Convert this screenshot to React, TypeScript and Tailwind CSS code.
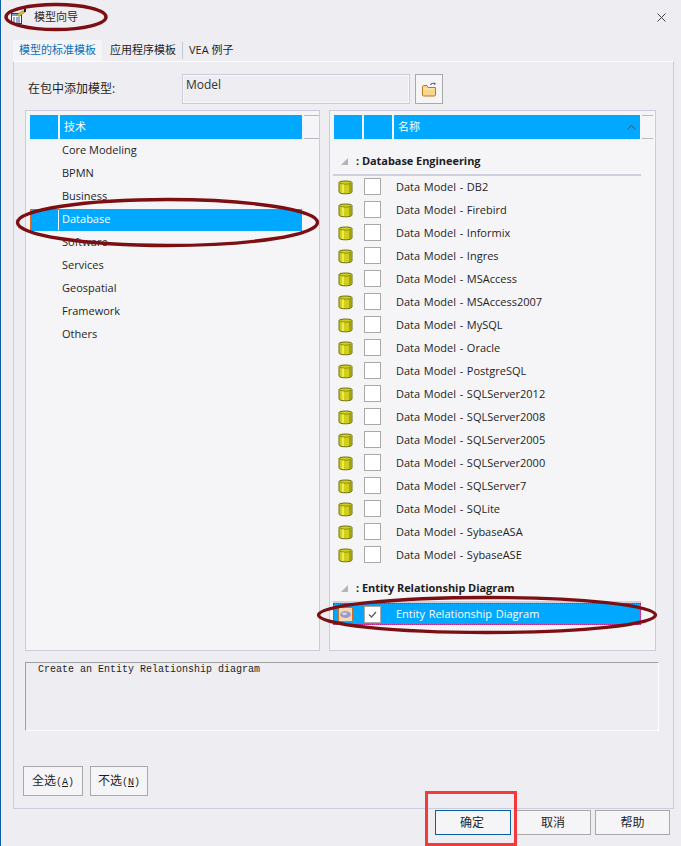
// App.tsx
// Boîte de dialogue "模型向导" : onglets, deux listes, description, boutons.
const font = { ui: 'font-["Open_Sans","Noto_Sans_CJK_SC",sans-serif]' }

const techs = ['Core Modeling', 'BPMN', 'Business', 'Database', 'Software', 'Services', 'Geospatial', 'Framework', 'Others']

const models = [
  'DB2', 'Firebird', 'Informix', 'Ingres', 'MSAccess', 'MSAccess2007', 'MySQL', 'Oracle', 'PostgreSQL',
  'SQLServer2012', 'SQLServer2008', 'SQLServer2005', 'SQLServer2000', 'SQLServer7', 'SQLite', 'SybaseASA', 'SybaseASE',
]

function DbIcon() {
  return (
    <svg width="15" height="16" viewBox="0 0 15 16" className="shrink-0 mb-[2px]">
      <path d="M1 3.5 C1 1.5 14 1.5 14 3.5 V13 C14 15.4 1 15.4 1 13 Z" fill="#cfcf1c" stroke="#6f6f12" />
      <path d="M2 4 C4 5.6 11 5.6 13 4" fill="none" stroke="#8c8c14" />
      <rect x="4" y="5.5" width="2" height="8.5" fill="#ecec50" />
      <rect x="11" y="5" width="2" height="9" fill="#a3a316" />
    </svg>
  )
}

function ErIcon() {
  return (
    <svg width="15" height="15" viewBox="0 0 15 15" className="shrink-0">
      <rect x="0.5" y="0.5" width="14" height="14" fill="#f4d9b8" stroke="#c4722c" />
      <ellipse cx="7.5" cy="7.5" rx="5" ry="3" fill="#9a9ccf" stroke="#8082b5" strokeWidth="0.6" />
      <ellipse cx="6.5" cy="6.8" rx="2.5" ry="1.2" fill="#d5d6ee" />
    </svg>
  )
}

function FolderIcon() {
  return (
    <svg width="15" height="15" viewBox="0 0 15 15">
      <path d="M8.5 3 C9 1.5 11 1 13 1.5" fill="none" stroke="#5a5a85" strokeWidth="1.2" />
      <path d="M12 0.5 L14 1.8 L12 3.2 Z" fill="#5a5a85" />
      <path d="M0.5 4.5 V13 C0.5 13.6 1 14 1.5 14 H12.5 C13 14 13.5 13.6 13.5 13 V5.5 H6 L5 3.5 H1.5 C1 3.5 0.5 4 0.5 4.5 Z" fill="#f6d68c" stroke="#b87a1e" />
      <rect x="1.5" y="6.5" width="11" height="1" fill="#fdf0c8" />
    </svg>
  )
}

function TitleIcon() {
  return (
    <svg width="17" height="16" viewBox="0 0 17 16">
      <rect x="1.5" y="4.5" width="10" height="10" fill="#fff" stroke="#34404f" />
      <rect x="2" y="5" width="9" height="2" fill="#7f9cc9" />
      <path d="M3 9 H5 M6 9 H10 M3 11 H5 M6 11 H10 M3 13 H5 M6 13 H10" stroke="#2f56a3" />
      <path d="M6.5 6 L13 1.5 L15 3 L9 7.5 Z" fill="#d6c23e" stroke="#77701e" strokeWidth="0.6" />
      <rect x="14" y="0" width="2" height="3" fill="#1c1c1c" />
    </svg>
  )
}

function Check() {
  return (
    <svg width="11" height="11" viewBox="0 0 11 11">
      <path d="M2 5.5 L4.5 8 L9 3" fill="none" stroke="#5f5f5f" strokeWidth="1.3" />
    </svg>
  )
}

function Box({ checked, className = '' }: { checked?: boolean; className?: string }) {
  return (
    <span className={`w-[17px] h-[17px] shrink-0 bg-white border border-[#a9a9a9] flex items-center justify-center ${className}`}>
      {checked && <Check />}
    </span>
  )
}

function GroupHeader({ label }: { label: string }) {
  return (
    <div className="h-[26px] w-[308px] flex items-center pl-[8px] pb-[2px] text-[11px] font-bold tracking-[-0.05px] text-[#1e1e1e] border-b-2 border-[#cfcfe0]">
      <span className="w-0 h-0 border-l-[7px] border-l-transparent border-b-[7px] border-b-[#b4b4b4] mr-[8px]" />
      {label}
    </div>
  )
}

function Btn({ label, w, primary, hotkey }: { label: string; w: string; primary?: boolean; hotkey?: string }) {
  return (
    <button className={`${w} h-full bg-[#f5f5f8] border text-[12px] text-[#1e1e1e] ${primary ? 'border-[#0a5fa0] pr-[2px]' : 'border-[#a9a9a9]'}`}>
      {label}
      {hotkey && (
        <span className="font-['Liberation_Mono',monospace] text-[10px]">
          (<span className="underline">{hotkey}</span>)
        </span>
      )}
    </button>
  )
}

export default function App() {
  return (
    <div className={`relative w-[681px] h-[846px] overflow-hidden bg-[#eeeef2] border-l border-[#0a5fa5] text-[#1e1e1e] ${font.ui}`}>
      {/* barre de titre */}
      <div className="h-[40px] flex items-center pl-[9px] pr-[15px] pb-[6px]">
        <TitleIcon />
        <span className="ml-[7px] text-[11px] text-[#2b2b2b]">模型向导</span>
        <svg width="9" height="9" viewBox="0 0 9 9" className="ml-auto">
          <path d="M0.5 0.5 L8.5 8.5 M8.5 0.5 L0.5 8.5" stroke="#444" />
        </svg>
      </div>

      {/* onglets */}
      <div className="h-[21px] ml-[12px] flex items-center text-[11px]">
        <div className="w-[89px] h-full bg-[#f5f5f8] flex items-center pl-[6px] text-[#0e6fb8]">模型的标准模板</div>
        <div className="pl-[8px] pr-[6px] border-r border-[#c8c8d0]">应用程序模板</div>
        <div className="pl-[6px]">VEA 例子</div>
      </div>

      {/* panneau */}
      <div className="ml-[12px] w-[661px] h-[748px] border-x border-b border-[#ccccdc] border-t border-t-white pt-[12px] pl-[11px] flex flex-col">
        <div className="flex h-[30px] items-center">
          <span className="w-[157px] pl-[3px] text-[12px]">在包中添加模型:</span>
          <div className="w-[228px] h-full border border-[#ccccdc] shadow-[inset_0_0_0_1px_#f7f7fa] px-[3px] pt-[1px] text-[12px] text-[#333]">Model</div>
          <div className="ml-[5px] w-[28px] h-full bg-[#f5f5f8] border border-[#a9a9a9] flex items-center justify-center">
            <FolderIcon />
          </div>
        </div>

        <div className="mt-[6px] flex gap-[9px] h-[541px]">
          {/* liste de gauche */}
          <div className="w-[295px] border border-[#ccccdc] bg-[#f5f5f8] pt-[4px] pl-[4px]">
            <div className="flex h-[24px] gap-[2px]">
              <div className="w-[28px] bg-[#00a8ff]" />
              <div className="w-[242px] bg-[#00a8ff] flex items-center pl-[4px] text-[11px] text-white">技术</div>
              <div className="w-[15px] border-t border-b border-[#b9b9c4]" />
            </div>
            <div className="w-[272px]">
              {techs.map((t) =>
                t === 'Database' ? (
                  <div key={t} className="h-[22px] mt-[1px] flex items-center text-[11px] bg-[#00a8ff] text-white border border-dotted border-[#e26a2c]">
                    <span className="w-[29px] h-full shrink-0 border-r border-white -ml-px mr-[1px]" />
                    <span className="pl-[2px] pb-[2px]">{t}</span>
                  </div>
                ) : (
                  <div key={t} className="h-[23px] flex items-center text-[11px]">
                    <span className="w-[30px] h-full shrink-0" />
                    <span className="pl-[2px]">{t}</span>
                  </div>
                ),
              )}
            </div>
          </div>

          {/* liste de droite */}
          <div className="w-[327px] border border-[#ccccdc] bg-[#f5f5f8] pt-[4px] pl-[3px]">
            <div className="flex h-[24px] gap-[2px] pl-[1px]">
              <div className="w-[28px] bg-[#00a8ff]" />
              <div className="w-[28px] bg-[#00a8ff]" />
              <div className="w-[246px] bg-[#00a8ff] flex items-center justify-between pl-[4px] pr-[4px] text-[11px] text-white">
                名称
                <svg width="9" height="5" viewBox="0 0 9 5"><path d="M0.5 4.5 L4.5 0.5 L8.5 4.5" fill="none" stroke="#1f5f86" /></svg>
              </div>
              <div className="w-[11px] border-t border-b border-[#b9b9c4]" />
            </div>
            <div className="mt-[11px]">
              <GroupHeader label=": Database Engineering" />
            </div>
            {models.map((m) => (
              <div key={m} className="h-[23px] flex items-center pl-[5px] text-[11px] [word-spacing:0.8px]">
                <DbIcon />
                <span className="w-[11px] shrink-0" />
                <Box className="mb-[2px]" />
                <span className="ml-[15px]">Data Model - {m}</span>
              </div>
            ))}
            <div className="mt-[10px]">
              <GroupHeader label=": Entity Relationship Diagram" />
            </div>
            <div className="w-[308px] h-[22px] flex items-center pl-[4px] text-[11px] [word-spacing:0.8px] text-white bg-[#00a8ff] border border-dotted border-[#c0208a]">
              <ErIcon />
              <span className="w-[11px] shrink-0" />
              <Box checked />
              <span className="ml-[15px]">Entity Relationship Diagram</span>
            </div>
          </div>
        </div>

        {/* description */}
        <div className="mt-[11px] w-[634px] h-[69px] border-t border-l border-[#a0a0a0] border-b border-r border-b-white border-r-white pl-[12px] pt-[1px] font-['Liberation_Mono',monospace] text-[10px] leading-[12px]">
          Create an Entity Relationship diagram
        </div>

        <div className="mt-[35px] ml-[-2px] flex h-[30px] gap-[7px]">
          <Btn label="全选" hotkey="A" w="w-[60px]" />
          <Btn label="不选" hotkey="N" w="w-[58px]" />
        </div>
      </div>

      {/* boutons du bas */}
      <div className="mt-[1px] ml-[434px] flex h-[25px] gap-[4px]">
        <Btn label="确定" w="w-[76px]" primary />
        <Btn label="取消" w="w-[76px]" />
        <Btn label="帮助" w="w-[75px]" />
      </div>

      {/* annotations rouges du tutoriel, par-dessus le dialogue */}
      <svg width="681" height="846" className="absolute left-[-1px] top-0 pointer-events-none">
        <g fill="none" stroke="#7b0f12" strokeWidth="3.4">
          <ellipse cx="56" cy="17" rx="50" ry="12.5" />
          <ellipse cx="167.5" cy="222.5" rx="150" ry="23" />
          <ellipse cx="487" cy="615" rx="168.5" ry="17.5" />
        </g>
      </svg>
      <div className="absolute left-[424px] top-[791px] w-[92px] h-[55px] border-[3px] border-[#f33a3a] pointer-events-none" />
    </div>
  )
}
